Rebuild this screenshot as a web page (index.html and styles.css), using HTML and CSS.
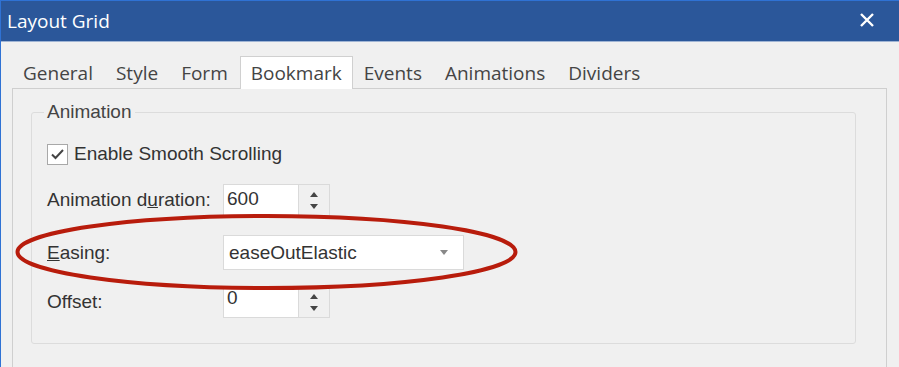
FILE: index.html
```html
<!DOCTYPE html>
<html lang="en">
<head>
    <meta charset="UTF-8">
    <title>Layout Grid</title>
    <link rel="stylesheet" href="styles.css">
</head>
<body>
    <div class="window">
        <div class="titlebar">
            <span class="title">Layout Grid</span>
            <button class="close" title="Close">
                <svg width="14" height="14" viewBox="0 0 14 14"><path d="M1 1 L13 13 M13 1 L1 13" stroke="#fff" stroke-width="2.4" fill="none"/></svg>
            </button>
        </div>
        <div class="content">
            <div class="tabs">
                <span class="tab">General</span>
                <span class="tab">Style</span>
                <span class="tab">Form</span>
                <span class="tab active">Bookmark</span>
                <span class="tab">Events</span>
                <span class="tab">Animations</span>
                <span class="tab">Dividers</span>
            </div>
            <div class="panel">
                <fieldset class="group">
                    <legend>Animation</legend>
                    <label class="check-row">
                        <span class="checkbox">
                            <svg width="19" height="19" viewBox="0 0 19 19"><path d="M4 9.5 L7.5 13 L15 5" stroke="#444" stroke-width="2" fill="none"/></svg>
                        </span>
                        Enable Smooth Scrolling
                    </label>
                    <div class="field-row row-duration">
                        <span class="label">Animation d<u>u</u>ration:</span>
                        <div class="spin">
                            <span class="spin-value">600</span>
                            <span class="spin-buttons"><span class="up"></span><span class="down"></span></span>
                        </div>
                    </div>
                    <div class="field-row row-easing">
                        <span class="label"><u>E</u>asing:</span>
                        <div class="select">
                            <span>easeOutElastic</span>
                            <span class="caret"></span>
                        </div>
                    </div>
                    <div class="field-row row-offset">
                        <span class="label">Offset:</span>
                        <div class="spin">
                            <span class="spin-value offset-value">0</span>
                            <span class="spin-buttons"><span class="up"></span><span class="down"></span></span>
                        </div>
                    </div>
                </fieldset>
            </div>
        </div>
        <svg class="highlight" width="899" height="367" viewBox="0 0 899 367">
            <ellipse cx="266.5" cy="252" rx="249" ry="36" fill="none" stroke="#b81c0c" stroke-width="4"/>
        </svg>
    </div>
</body>
</html>
```

FILE: styles.css
```css
body {
    margin: 0;
    background-color: #f0f0f0;
    font-family: "Liberation Sans", Arial, sans-serif;
}
.window {
    position: relative;
    width: 899px;
    height: 367px;
    box-sizing: border-box;
    border-left: 1px solid #2f72d4;
    background-color: #f0f0f0;
    overflow: hidden;
}
.titlebar {
    display: flex;
    align-items: center;
    justify-content: space-between;
    height: 42px;
    box-sizing: border-box;
    border-top: 1px solid #2f72d4;
    border-bottom: 1px solid #9fb4d4;
    background-color: #2b579a;
    padding: 0 25px 0 6px;
}
.title {
    color: #fff;
    font-family: "Open Sans", sans-serif;
    font-size: 19px;
}
.close {
    display: flex;
    background: none;
    border: 0;
    padding: 0;
    margin-top: -2px;
}
.content {
    padding: 14px 12px 0 11px;
}
.tabs {
    display: flex;
    height: 32px;
    position: relative;
    z-index: 1;
}
.tab {
    display: flex;
    align-items: center;
    padding: 0 11px 0 10px;
    font-family: "Open Sans", sans-serif;
    font-size: 19px;
    color: #444;
    border: 1px solid transparent;
    border-bottom: 0;
}
.tab.active {
    background-color: #fff;
    border-color: #d0d0d0;
    height: 33px;
    box-sizing: border-box;
    padding: 0 10px;
}
.panel {
    height: 280px;
    border: 1px solid #cfcfcf;
    background-color: #f0f0f0;
}
.group {
    margin: 12px 30px 0 18px;
    padding: 0 15px 25px 15px;
    border: 1px solid #dcdcdc;
    border-radius: 3px;
    display: flex;
    flex-direction: column;
}
.group legend {
    padding: 0 3px;
    margin-left: -3px;
    font-size: 19px;
    line-height: 22px;
    color: #444;
}
.check-row {
    display: flex;
    align-items: center;
    gap: 6px;
    margin-top: 20px;
    font-size: 19px;
    color: #333;
}
.checkbox {
    display: flex;
    width: 19px;
    height: 19px;
    border: 1px solid #a8a8a8;
    background-color: #fff;
}
.field-row {
    display: flex;
    align-items: center;
    font-size: 19px;
    color: #333;
}
.row-duration {
    margin-top: 19px;
}
.row-easing {
    margin-top: 19px;
}
.row-offset {
    margin-top: 16px;
}
.label {
    width: 176px;
}
.spin {
    display: flex;
    height: 32px;
    box-sizing: border-box;
    border: 1px solid #dadada;
}
.spin-value {
    width: 71px;
    padding-left: 3px;
    background-color: #fff;
    line-height: 28px;
    border-right: 1px solid #dadada;
}
.offset-value {
    line-height: 22px;
}
.spin-buttons {
    width: 30px;
    display: flex;
    flex-direction: column;
    align-items: center;
    justify-content: space-between;
    padding: 7px 0 6px;
    box-sizing: border-box;
}
.up {
    width: 0;
    height: 0;
    border-left: 4px solid transparent;
    border-right: 4px solid transparent;
    border-bottom: 5px solid #444;
}
.down {
    width: 0;
    height: 0;
    border-left: 4px solid transparent;
    border-right: 4px solid transparent;
    border-top: 5px solid #444;
}
.select {
    display: flex;
    align-items: center;
    justify-content: space-between;
    width: 241px;
    height: 35px;
    box-sizing: border-box;
    padding: 0 15px 0 5px;
    border: 1px solid #dadada;
    background-color: #fff;
}
.caret {
    width: 0;
    height: 0;
    border-left: 4px solid transparent;
    border-right: 4px solid transparent;
    border-top: 5px solid #888;
}
.highlight {
    position: absolute;
    left: -1px;
    top: 0;
    pointer-events: none;
}
```
